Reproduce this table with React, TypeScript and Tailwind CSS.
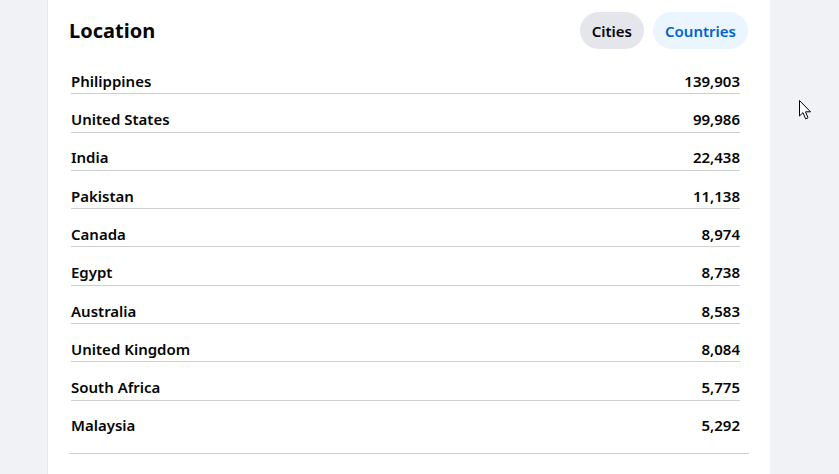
const countries = [
  { name: "Philippines", count: "139,903" },
  { name: "United States", count: "99,986" },
  { name: "India", count: "22,438" },
  { name: "Pakistan", count: "11,138" },
  { name: "Canada", count: "8,974" },
  { name: "Egypt", count: "8,738" },
  { name: "Australia", count: "8,583" },
  { name: "United Kingdom", count: "8,084" },
  { name: "South Africa", count: "5,775" },
  { name: "Malaysia", count: "5,292" },
];

const Cursor = () => (
  <svg className="absolute left-[799px] top-[100px]" width="13" height="21" viewBox="0 0 13 21">
    <path
      d="M0.5 0.5 L0.5 16 L4 12.6 L6.6 18.8 L9 17.8 L6.5 11.8 L11.5 11.8 Z"
      fill="#fff"
      stroke="#000"
      strokeWidth="1"
      strokeLinejoin="round"
    />
  </svg>
);

const App = () => {
  return (
    <div
      className="relative h-[474px] w-[839px] overflow-hidden bg-[#f0f2f5] text-[#050505]"
      style={{ fontFamily: '"Noto Sans", "Open Sans", sans-serif' }}
    >
      <div className="ml-[47px] h-full w-[723px] border-l border-[#e4e6eb] bg-white px-[21px] pt-[12px]">
        <div className="flex h-[37px] items-center justify-between">
          <h2 className="text-[20px] font-bold leading-none">Location</h2>
          <div className="flex gap-[9px] pr-[1px]">
            <button className="h-[37px] rounded-full bg-[#e4e6eb] px-[12px] pt-[2px] text-[15px] font-semibold">
              Cities
            </button>
            <button className="h-[37px] rounded-full bg-[#ebf5ff] px-[12px] pt-[2px] text-[15px] font-semibold text-[#0064d1]">
              Countries
            </button>
          </div>
        </div>

        <div className="mt-[7px] border-b border-[#ced0d4] pb-[14px]">
          {countries.map((c, i) => (
            <div
              key={c.name}
              className={
                i < countries.length - 1
                  ? "ml-[2px] mr-[9px] flex h-[38.3px] items-end justify-between border-b border-[#ced0d4] pb-[1px] text-[15px] font-semibold"
                  : "ml-[2px] mr-[9px] flex h-[38.3px] items-end justify-between pb-[2px] text-[15px] font-semibold"
              }
            >
              <span>{c.name}</span>
              <span>{c.count}</span>
            </div>
          ))}
        </div>
      </div>
      <Cursor />
    </div>
  );
};

export default App;
